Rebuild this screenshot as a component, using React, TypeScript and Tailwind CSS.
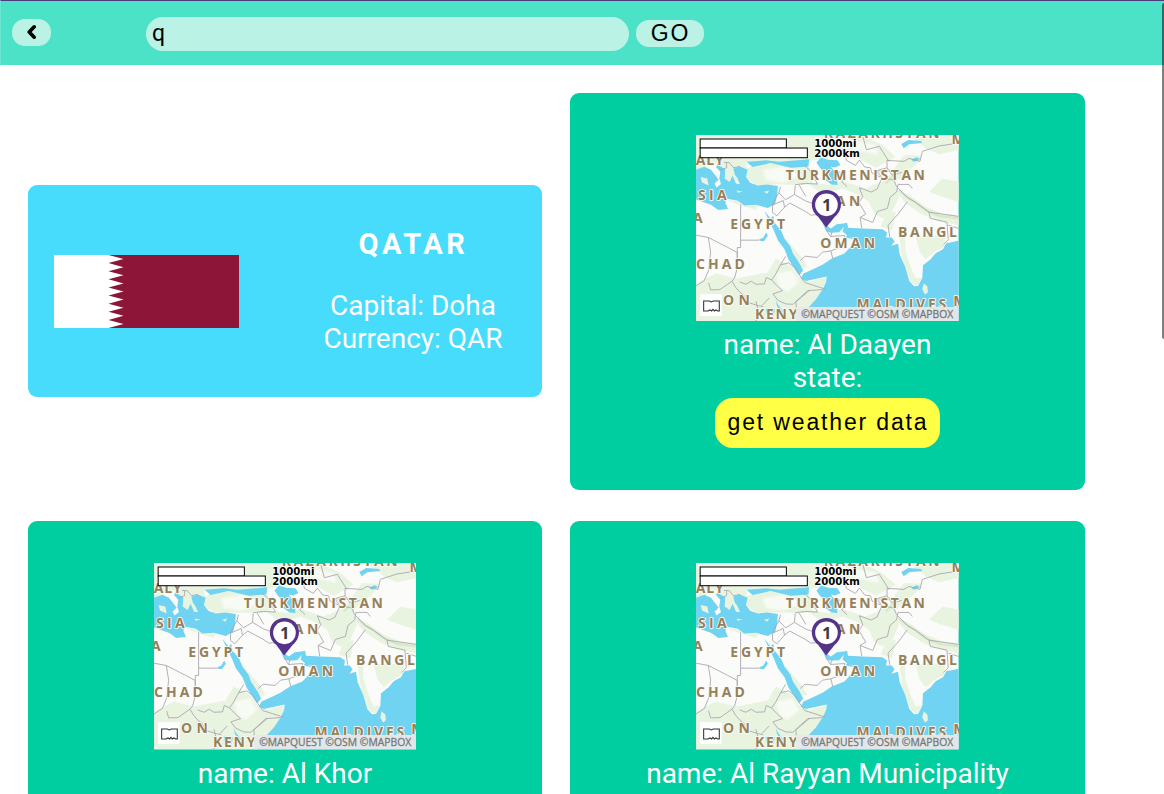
import React, { useState } from "react";

const LAND = "#fbfbfa";
const GREEN = "#e8f4e0";
const SEA = "#70d3f1";

function MapPicture() {
  return (
    <svg
      viewBox="0 0 789 558"
      preserveAspectRatio="none"
      className="block h-[186.3px] w-[262.6px] shrink-0"
      role="img"
      aria-label="Map"
    >
      <rect width="789" height="558" fill={LAND} />
      {/* vegetation */}
      <g fill={GREEN} className="blur-[2px]">
        <path d="M0 0H500L560 30L600 65L540 98L470 60L430 45L400 70L300 82L150 80L160 140L90 145L60 80L0 110Z" />
        <path d="M150 100L190 88L260 84L340 95L370 130L330 150L240 148L180 150L150 125Z" />
        <path d="M330 140L400 150L440 138L510 160L570 135L625 60L680 62L660 90L600 140L610 185L590 230L560 250L535 235L520 200L490 180L440 160L380 178Z" />
        <path d="M570 235L600 230L590 285L555 275Z" />
        <path d="M600 165L640 180L690 215L740 235L789 240V270L730 258L680 238L630 205Z" />
        <path d="M660 305L700 300L750 305L745 335L715 352L690 372L672 350Z" />
        <path d="M0 445L60 415L120 430L215 412L240 370L290 395L310 425L340 440L392 425L380 470L330 530L310 558H0Z" />
        <path d="M611 305L628 310L630 350L645 395L660 430L680 425L665 452L650 445L625 395Z" />
        <path d="M640 0H789V45L730 58L690 40Z" />
        <path d="M700 170L740 130L789 140V200L740 185Z" />
        <path d="M232 255L245 270L300 370L315 400L335 395L320 370L270 310Z" />
        <path d="M90 195L190 205L180 225L130 210Z" />
      </g>
      <g fill="#f8faf4" className="blur-[3px]">
        <path d="M200 105L270 95L320 120L260 143L210 135Z" />
        <path d="M380 20L440 10L540 30L550 60L480 45Z" />
        <path d="M240 415L290 405L310 440L275 470L250 455Z" />
        <path d="M30 20L140 30L250 40L280 70L100 65Z" />
      </g>
      <g fill="none" stroke="#d2e6c6" strokeWidth="7" opacity=".8">
        <path d="M610 165L635 187L660 202L690 225L730 242L789 250" />
        <path d="M540 110L575 105L600 116L570 145" />
      </g>
      {/* water */}
      <g fill={SEA}>
        <path d="M0 104L25 95L45 104L68 133L56 146L62 157L75 147L70 130L73 110L60 96L65 88L88 103L86 130L101 141L110 122L120 145L132 147L124 128L117 119L112 101L132 94L155 104L150 126L163 143L185 151L214 148L246 153L244 179L238 206L216 219L180 209L145 211L126 197L94 191L88 202L96 222L67 225L46 210L0 193Z" />
        <path d="M152 80L210 76L250 80L340 73L338 94L285 98L224 84L170 96Z" />
        <path d="M362 82L375 68L398 74L425 76L434 90L418 97L405 94L418 112L428 118L424 127L425 150L407 148L391 136L383 109L370 95Z" />
        <path d="M205 227L224 250L232 242L236 263L256 287L266 311L284 335L291 354L311 385L322 406L310 421L293 396L278 373L266 342L246 315L234 286L225 267Z" />
        <path d="M378 257L389 269L405 280L423 267L443 265L454 263L457 278L500 280L560 282L574 292L571 307L588 307L597 318L587 332L607 326L612 358L628 394L641 437L655 453L667 452L680 428L682 390L705 372L720 354L742 342L752 324L789 317V558H310L325 530L360 493L381 462L391 439L393 424L330 437L315 430L323 415L345 405L380 389L408 370L446 355L469 330L480 310L456 302L440 288L445 275L430 291L404 293L391 288Z" />
        <path d="M455 298L475 312L449 307Z" />
        <path d="M617 27L638 15L676 18L680 24L641 28L624 40Z M646 74L663 67L674 72L655 80Z M190 312L202 308L211 292L216 302L204 318L192 317Z M239 492L244 505L254 518L263 530L254 530L243 511Z M209 520L237 522L233 544L214 540Z" />
      </g>
      <g fill={GREEN}>
        <path d="M684 444L695 454L697 471L688 478L680 462Z" />
        <path d="M204 170L220 166L214 176Z M122 166L140 169L125 173Z M14 126L34 130L38 151L18 142Z" />
      </g>
      {/* borders */}
      <g fill="none" stroke="#aaa5ae" strokeWidth="2.6" strokeLinejoin="round">
        <path d="M134 208V337H124V367M134 315H190M0 300L37 307L94 336L124 352V398L116 428L108 438L119 456L131 470L145 481L154 501L187 511L202 514" />
        <path d="M37 307L44 351L38 405L25 436L0 452M38 443L44 464L72 463L108 438" />
        <path d="M131 440L150 447L166 438L180 447L206 446L211 427L227 434L238 419L254 389L269 364" />
        <path d="M254 389L278 383L298 398L312 421M227 434L243 451L260 466L231 476L246 495L270 506L291 507L336 466L380 463M312 421L327 442L390 462" />
        <path d="M254 155L249 173L240 188L230 210M249 173L269 194L296 178L298 151M230 210L262 196L266 216L243 242L230 232ZM266 216L282 204L327 228L345 240L360 239M296 178L330 198L360 208M310 150L330 184" />
        <path d="M313 376L328 363L364 367L380 351L405 347L411 370M405 347L440 334L447 301L404 304L392 285M404 304L409 291" />
        <path d="M454 155L438 140L447 125L420 102M498 279L493 247L510 237L490 202L501 185L491 158L526 171L544 162L559 128L594 135L603 155M493 247L531 262L545 229L575 220L583 187L603 170L607 148L640 148L650 160M603 155L635 187L660 202L700 231L748 238L789 244" />
        <path d="M429 42L446 50L452 76L479 91L491 75L507 96L524 98L529 114L559 128M559 128L543 107L574 98L574 76L625 79L640 70L673 79L680 49L730 33L789 24M574 98L589 120L618 112" />
        <path d="M635 200L608 236L577 270L582 305M700 231L704 250L754 261L758 314L744 328M758 270L789 280M500 0L512 44L551 34L580 80" />
        <path d="M84 82L100 83L113 98L132 94M298 149L329 145L365 147M325 90L341 105L354 125L365 147M92 84V98L73 105M180 498L188 529L180 558M220 488L199 510M340 466L300 500L302 525" />
      </g>
      {/* place labels */}
      <g
        className="font-bold"
        fontFamily="'Open Sans','Noto Sans',sans-serif"
        fontSize="42"
        fill="#95805c"
        stroke="#fdfcf6"
        strokeWidth="5"
        strokeLinejoin="round"
        paintOrder="stroke"
      >
        <text x="384" y="9" textLength="348">KAZAKHSTAN</text>
        <text x="768" y="27">M</text>
        <text x="-1" y="89" textLength="84">ALY</text>
        <text x="270" y="134" textLength="418">TURKMENISTAN</text>
        <text x="6" y="195" textLength="86">SIA</text>
        <text x="420" y="214" textLength="74">AN</text>
        <text x="-9" y="264">A</text>
        <text x="103" y="283" textLength="165">EGYPT</text>
        <text x="373" y="339" textLength="165">OMAN</text>
        <text x="607" y="306" textLength="177">BANGL</text>
        <text x="0" y="402" textLength="147">CHAD</text>
        <text x="81" y="508" textLength="81">ON</text>
        <text x="177" y="551" textLength="128">KENY</text>
        <text x="482" y="522" textLength="270">MALDIVES</text>
        <text x="773" y="511">M</text>
      </g>
      {/* scale bars */}
      <g fill="white" stroke="black" strokeWidth="3">
        <rect x="12.5" y="12" width="259" height="27" />
        <rect x="12.5" y="39" width="322" height="29" />
      </g>
      <g
        fontFamily="'DejaVu Sans',sans-serif"
        className="font-bold"
        fontSize="31"
        fill="black"
        stroke="white"
        strokeWidth="4"
        paintOrder="stroke"
      >
        <text x="355" y="37" textLength="127" lengthAdjust="spacingAndGlyphs">1000mi</text>
        <text x="355" y="66" textLength="137" lengthAdjust="spacingAndGlyphs">2000km</text>
      </g>
      {/* marker */}
      <path d="M391 277L367 245C335 222 344 166 392 165C440 166 449 222 417 245Z" fill="#54338a" />
      <circle cx="392" cy="209" r="34" fill="white" />
      <text x="393" y="227" textAnchor="middle" fontFamily="'Open Sans',sans-serif" fontSize="50" className="font-bold" fill="#3c3c40">1</text>
      {/* provider badge and attribution */}
      <rect x="12" y="477" width="65" height="65" rx="3" fill="white" />
      <path d="M23 497H40L46 500L52 497H70V527H65L60 524L55 527L51 522L47 527L42 524L36 527H23Z" fill="white" stroke="#333" strokeWidth="3.2" />
      <rect x="300" y="515" width="489" height="43" fill="#e8e8e8" fillOpacity=".94" />
      <text x="316" y="547" textLength="457" lengthAdjust="spacingAndGlyphs" fontFamily="'Open Sans',sans-serif" fontSize="34" fill="#777" stroke="#777" strokeWidth=".9">
        ©MAPQUEST ©OSM ©MAPBOX
      </text>
    </svg>
  );
}

function Flag() {
  const teeth = Array.from({ length: 9 }, (_, i) => `L69.5 ${(i * 2 + 1) * (73 / 18)}L54.5 ${(i * 2 + 2) * (73 / 18)}`).join("");
  return (
    <svg viewBox="0 0 185 73" className="mt-px block h-[73px] w-[185px] shrink-0" role="img" aria-label="Flag">
      <rect width="185" height="73" fill="#8d1538" />
      <path d={`M0 0H54.5${teeth}H0Z`} fill="white" />
    </svg>
  );
}

function CityCard({ name }: { name: string }) {
  return (
    <article className="flex h-[397px] flex-col items-center rounded-[9px] bg-[#00cea1] pt-[42px] text-[28px] leading-[33px] text-white">
      <MapPicture />
      <p className="mt-[7px]">name: {name}</p>
      <p>state:</p>
      <button className="mt-1 h-[50px] w-[225px] rounded-[18px] bg-[#ffff45] pb-[2px] pl-[1px] font-['Liberation_Sans',sans-serif] text-[23px] tracking-[1.85px] whitespace-nowrap text-black">
        get weather data
      </button>
    </article>
  );
}

export default function App() {
  const [query, setQuery] = useState("q");
  return (
    <div className="relative h-[794px] w-full overflow-hidden bg-white font-['Roboto',sans-serif]">
      <header className="flex h-[65px] items-start border-t border-l border-t-[#4b3b7d] border-l-[#6ce5d0] bg-[#4ce2c8]">
        <button aria-label="Back" className="mt-[18px] ml-[11px] flex h-[27px] w-[39px] items-center justify-center rounded-[13px] bg-[#baf3e6]">
          <svg viewBox="0 0 10 16" className="mb-[2px] h-4 w-[10px]" fill="none" stroke="black" strokeWidth="3.6" strokeLinecap="round" strokeLinejoin="round">
            <path d="M7.2 2.8L2.2 8L7.2 13.2" />
          </svg>
        </button>
        <input
          aria-label="Search"
          value={query}
          onChange={(event) => setQuery(event.target.value)}
          className="mt-4 ml-[95px] h-[34px] w-[483px] rounded-[17px] bg-[#baf3e6] px-[6px] text-[23px] text-black outline-none"
        />
        <button className="mt-[19px] ml-[7px] h-[27px] w-[68px] rounded-[13px] bg-[#baf3e6] pl-[1px] font-['Liberation_Sans',sans-serif] text-[23px] leading-[27px] tracking-[1.85px] text-black">
          GO
        </button>
      </header>
      <main className="grid grid-cols-[514px_515px] items-center gap-x-7 gap-y-[31.4px] px-7 pt-7">
        <article className="mb-px flex h-[212px] items-center rounded-[9px] bg-[#47dbfc] pl-[26px] text-white">
          <Flag />
          <div className="ml-[56px] flex w-[236px] flex-col items-center text-[28px] leading-[33px]">
            <h2 className="mb-[28px] pl-[1px] text-[29px] leading-[34px] font-bold tracking-[3.5px]">QATAR</h2>
            <p>Capital: Doha</p>
            <p>Currency: QAR</p>
          </div>
        </article>
        <CityCard name="Al Daayen" />
        <CityCard name="Al Khor" />
        <CityCard name="Al Rayyan Municipality" />
      </main>
      <div className="absolute top-[3px] right-0 h-[336px] w-[2px] rounded-l-[2px] bg-black/50" />
    </div>
  );
}
